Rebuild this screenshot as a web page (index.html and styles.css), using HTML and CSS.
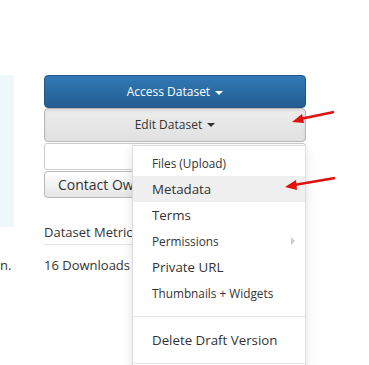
FILE: index.html
```html
<!DOCTYPE html>
<html>
<head>
  <meta charset="utf-8">
  <title>Dataset</title>
  <link rel="stylesheet" href="styles.css">
</head>
<body>
  <div class="page">
    <div class="left-col">
      <div class="summary-panel"></div>
      <p class="cut-text">n.</p>
    </div>

    <div class="right-col">
      <button class="btn btn-primary">Access Dataset <span class="caret"></span></button>
      <div class="edit-wrap">
        <button class="btn btn-default btn-open">Edit Dataset <span class="caret"></span></button>
        <ul class="dropdown-menu">
          <li class="small">Files (Upload)</li>
          <li class="active">Metadata</li>
          <li>Terms</li>
          <li class="small submenu">Permissions <span class="sub-caret"></span></li>
          <li>Private URL</li>
          <li class="small">Thumbnails + Widgets</li>
          <li class="divider"></li>
          <li>Delete Draft Version</li>
          <li class="divider"></li>
        </ul>
      </div>
      <div class="blank-box"></div>
      <button class="btn btn-default btn-contact">Contact Owner</button>

      <div class="metrics">
        <h4>Dataset Metrics</h4>
        <p>16 Downloads</p>
      </div>
    </div>
  </div>

  <svg class="arrows" width="369" height="365" viewBox="0 0 369 365">
    <line x1="334" y1="112" x2="300" y2="119" stroke="#e0100c" stroke-width="2.5"/>
    <polygon points="292,122 302,114 304,123" fill="#e0100c"/>
    <line x1="335" y1="178" x2="294" y2="185" stroke="#e0100c" stroke-width="2.5"/>
    <polygon points="285,187 296,180 297,190" fill="#e0100c"/>
  </svg>
</body>
</html>
```

FILE: styles.css
```css
body {
    margin: 0;
    min-height: 365px;
    font-family: "Open Sans", "Noto Sans", sans-serif;
    color: #333;
    background-color: #fff;
}
.page {
    display: flex;
    padding-top: 75px;
}
.left-col {
    width: 14px;
    margin-right: 30px;
}
.summary-panel {
    height: 152px;
    background-color: #eef7fa;
}
.cut-text {
    margin: 29px 0 0 0;
    font-size: 13px;
    white-space: nowrap;
}
.right-col {
    width: 262px;
}
.btn {
    display: block;
    width: 100%;
    font-family: inherit;
    font-size: 12px;
    border-radius: 4px;
    cursor: pointer;
}
.btn-primary {
    height: 33px;
    color: #fff;
    background-image: linear-gradient(#3179b7, #235d91);
    border: 1px solid #245580;
}
.btn-default {
    color: #333;
    border: 1px solid #b8b8b8;
}
.btn-open {
    height: 34px;
    padding-top: 0;
    padding-bottom: 2px;
    background-image: linear-gradient(#ededed, #e1e1e1);
    box-shadow: inset 0 2px 3px rgba(0, 0, 0, 0.08);
}
.caret {
    display: inline-block;
    width: 0;
    height: 0;
    margin-left: 2px;
    vertical-align: middle;
    border-top: 4px solid;
    border-left: 4px solid transparent;
    border-right: 4px solid transparent;
}
.edit-wrap {
    position: relative;
}
.dropdown-menu {
    position: absolute;
    top: 37px;
    left: 88px;
    width: 172px;
    margin: 0;
    padding: 4px 0 0 0;
    list-style: none;
    background-color: #fff;
    border: 1px solid #ddd;
    box-shadow: 0 4px 10px rgba(0, 0, 0, 0.12);
    z-index: 5;
}
.dropdown-menu li {
    height: 26px;
    line-height: 26px;
    padding-left: 19px;
    font-size: 13.3px;
    white-space: nowrap;
}
.dropdown-menu li.small {
    font-size: 11.8px;
}
.dropdown-menu li.active {
    background-color: #efefef;
}
.dropdown-menu li.divider {
    height: 1px;
    margin: 10px 0;
    padding: 0;
    background-color: #e5e5e5;
}
.submenu {
    position: relative;
}
.sub-caret {
    position: absolute;
    right: 10px;
    top: 9px;
    border-left: 4px solid #ccc;
    border-top: 4px solid transparent;
    border-bottom: 4px solid transparent;
}
.blank-box {
    height: 27px;
    margin-top: 1px;
    border: 1px solid #ccc;
    border-radius: 3px;
    box-sizing: border-box;
}
.btn-contact {
    height: 27px;
    margin-top: 1px;
    text-align: left;
    padding-left: 13px;
    font-size: 14px;
    background-image: linear-gradient(#fff, #e6e6e6);
}
.metrics h4 {
    margin: 25px 0 0 0;
    padding-bottom: 3px;
    font-size: 13px;
    font-weight: normal;
    border-bottom: 1px solid #e5e5e5;
}
.metrics p {
    margin: 11px 0 0 0;
    font-size: 13px;
}
.arrows {
    position: absolute;
    top: 0;
    left: 0;
    pointer-events: none;
    z-index: 10;
}
```
